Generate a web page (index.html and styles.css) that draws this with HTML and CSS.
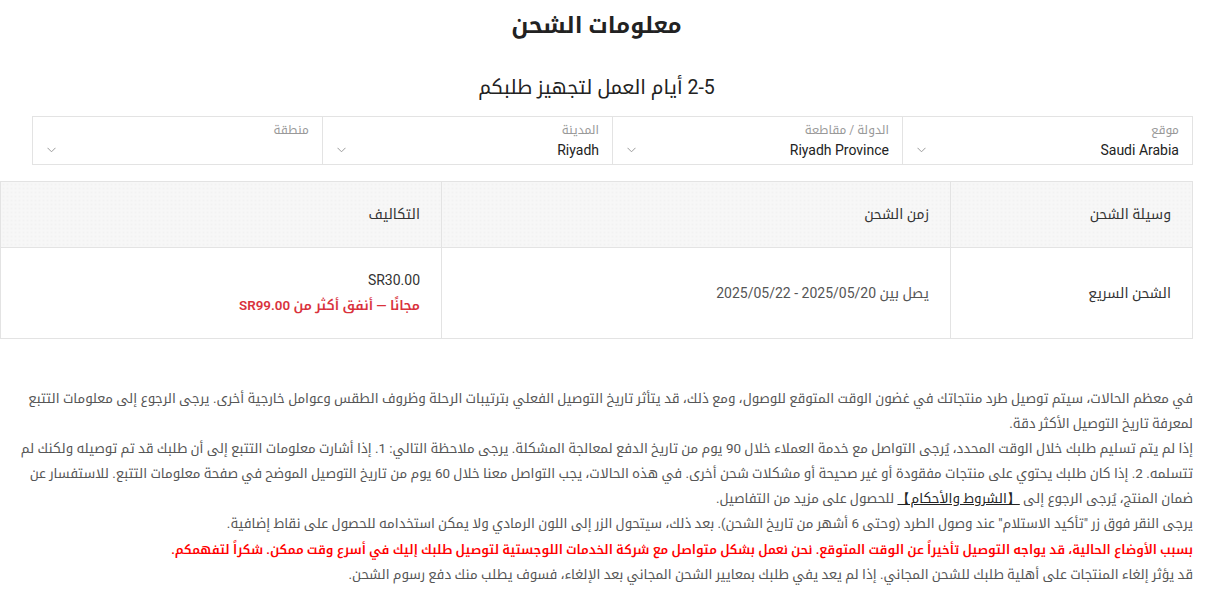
FILE: index.html
```html
<!DOCTYPE html>
<html lang="ar" dir="rtl">
<head>
<meta charset="utf-8">
<link rel="stylesheet" href="styles.css">
</head>
<body>
<div class="page">
  <h1 class="title">معلومات الشحن</h1>
  <h2 class="subtitle">2-5 أيام العمل لتجهيز طلبكم</h2>
  <div class="selects">
    <div class="sel">
      <div class="sel-label">موقع</div>
      <div class="sel-row"><span class="sel-value">Saudi Arabia</span><svg class="chev" width="9" height="6" viewBox="0 0 9 6"><path d="M0.5 0.8 L4.5 4.8 L8.5 0.8" fill="none" stroke="#9a9a9a" stroke-width="1"/></svg></div>
    </div>
    <div class="sel">
      <div class="sel-label">الدولة / مقاطعة</div>
      <div class="sel-row"><span class="sel-value">Riyadh Province</span><svg class="chev" width="9" height="6" viewBox="0 0 9 6"><path d="M0.5 0.8 L4.5 4.8 L8.5 0.8" fill="none" stroke="#9a9a9a" stroke-width="1"/></svg></div>
    </div>
    <div class="sel">
      <div class="sel-label">المدينة</div>
      <div class="sel-row"><span class="sel-value">Riyadh</span><svg class="chev" width="9" height="6" viewBox="0 0 9 6"><path d="M0.5 0.8 L4.5 4.8 L8.5 0.8" fill="none" stroke="#9a9a9a" stroke-width="1"/></svg></div>
    </div>
    <div class="sel">
      <div class="sel-label">منطقة</div>
      <div class="sel-row"><span class="sel-value"></span><svg class="chev" width="9" height="6" viewBox="0 0 9 6"><path d="M0.5 0.8 L4.5 4.8 L8.5 0.8" fill="none" stroke="#9a9a9a" stroke-width="1"/></svg></div>
    </div>
  </div>
  <table class="ship">
    <thead>
      <tr><th class="c1">وسيلة الشحن</th><th class="c2">زمن الشحن</th><th class="c3">التكاليف</th></tr>
    </thead>
    <tbody>
      <tr>
        <td class="c1">الشحن السريع</td>
        <td class="c2">يصل بين 2025/05/20 - 2025/05/22</td>
        <td class="c3"><div class="price">SR30.00</div><div class="free">مجانًا — أنفق أكثر من SR99.00</div></td>
      </tr>
    </tbody>
  </table>
  <div class="notes">
    <p>في معظم الحالات، سيتم توصيل طرد منتجاتك في غضون الوقت المتوقع للوصول، ومع ذلك، قد يتأثر تاريخ التوصيل الفعلي بترتيبات الرحلة وظروف الطقس وعوامل خارجية أخرى. يرجى الرجوع إلى معلومات التتبع لمعرفة تاريخ التوصيل الأكثر دقة.</p>
    <p>إذا لم يتم تسليم طلبك خلال الوقت المحدد، يُرجى التواصل مع خدمة العملاء خلال 90 يوم من تاريخ الدفع لمعالجة المشكلة. يرجى ملاحظة التالي: 1. إذا أشارت معلومات التتبع إلى أن طلبك قد تم توصيله ولكنك لم تتسلمه. 2. إذا كان طلبك يحتوي على منتجات مفقودة أو غير صحيحة أو مشكلات شحن أخرى. في هذه الحالات، يجب التواصل معنا خلال 60 يوم من تاريخ التوصيل الموضح في صفحة معلومات التتبع. للاستفسار عن ضمان المنتج، يُرجى الرجوع إلى <a class="link" href="#">【الشروط والأحكام】</a> للحصول على مزيد من التفاصيل.</p>
    <p>يرجى النقر فوق زر "تأكيد الاستلام" عند وصول الطرد (وحتى 6 أشهر من تاريخ الشحن). بعد ذلك، سيتحول الزر إلى اللون الرمادي ولا يمكن استخدامه للحصول على نقاط إضافية.</p>
    <p class="warn">بسبب الأوضاع الحالية، قد يواجه التوصيل تأخيراً عن الوقت المتوقع. نحن نعمل بشكل متواصل مع شركة الخدمات اللوجستية لتوصيل طلبك إليك في أسرع وقت ممكن. شكراً لتفهمكم.</p>
    <p>قد يؤثر إلغاء المنتجات على أهلية طلبك للشحن المجاني. إذا لم يعد يفي طلبك بمعايير الشحن المجاني بعد الإلغاء، فسوف يطلب منك دفع رسوم الشحن.</p>
  </div>
</div>
</body>
</html>
```
FILE: styles.css
```css
html, body {
  margin: 0;
  padding: 0;
  background: #fff;
}
body {
  font-family: Roboto, "Noto Kufi Arabic", "Noto Sans Arabic", "DejaVu Sans", sans-serif;
  color: #333;
}
.page {
  width: 1193px;
  margin: 0 auto 0 0;
  direction: rtl;
}
.title {
  margin: 0;
  padding-top: 7px;
  height: 46px;
  text-align: center;
  font-size: 22.5px;
  font-weight: bold;
  color: #222;
  line-height: 36px;
}
.subtitle {
  margin: 20px 0 0;
  text-align: center;
  font-size: 19.5px;
  font-weight: normal;
  color: #222;
  line-height: 30px;
}
.selects {
  margin: 13px 0 0 33px;
  display: flex;
  height: 49px;
}
.sel {
  flex: 1;
  border: 1px solid #e3e3e3;
  margin-left: -1px;
  box-sizing: border-box;
  padding: 4px 13px 0 14px;
}
.sel-label {
  font-size: 12px;
  color: #999;
  line-height: 18px;
}
.sel-row {
  display: flex;
  justify-content: space-between;
  align-items: center;
  height: 22px;
}
.sel-value {
  font-size: 14px;
  color: #222;
}
.chev {
  display: block;
}
.ship {
  margin-top: 16px;
  width: 1193px;
  border-collapse: collapse;
  font-size: 14px;
}
.ship th, .ship td {
  border: 1px solid #e3e3e3;
  text-align: right;
  padding: 0 21px;
  font-weight: normal;
  color: #333;
}
.ship th {
  height: 65px;
  background-color: #f7f7f7;
  background-image: radial-gradient(#ececec 0.6px, transparent 0.8px);
  background-size: 4px 4px;
}
.ship td {
  height: 90px;
}
.c1 { width: 199px; }
.c2 { width: 466px; }
.c3 { width: auto; }
.ship td.c2 { color: #555; }
.price {
  line-height: 26px;
}
.free {
  color: #d9323c;
  font-weight: 600;
  font-size: 13.4px;
  line-height: 26px;
}
.notes {
  margin-top: 47px;
  padding: 0 0 0 14px;
  font-size: 13.4px;
  color: #555;
  line-height: 25.1px;
}
.notes p {
  margin: 0;
}
.link {
  color: #222;
  text-decoration: underline;
}
.warn {
  color: #f00;
  font-weight: 600;
  font-size: 12.7px;
}
```
